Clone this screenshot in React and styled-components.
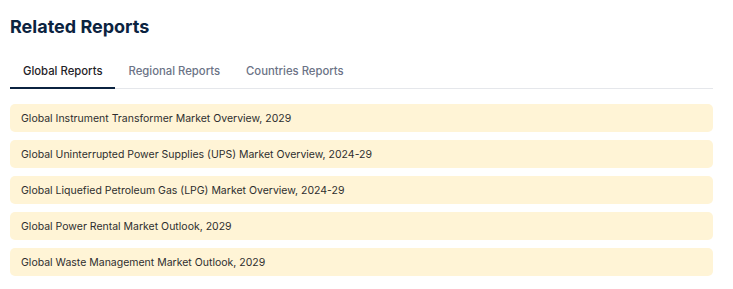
import styled, { createGlobalStyle } from 'styled-components'

const reports = [
    "Global Instrument Transformer Market Overview, 2029",
    "Global Uninterrupted Power Supplies (UPS) Market Overview, 2024-29",
    "Global Liquefied Petroleum Gas (LPG) Market Overview, 2024-29",
    "Global Power Rental Market Outlook, 2029",
    "Global Waste Management Market Outlook, 2029",
];

const tabs = ["Global Reports", "Regional Reports", "Countries Reports"];

export default function App () {
    return(
        <>
            <GlobalStyle/>
            <Section>
                <Title>Related Reports</Title>
                <TabBar>
                    {tabs.map((t, i) => <Tab key={t} $active={i === 0}>{t}</Tab>)}
                </TabBar>
                <List>
                    {reports.map(r => <ReportItem key={r}>{r}</ReportItem>)}
                </List>
            </Section>
        </>
    )
};

//styles______________________________________________
const GlobalStyle = createGlobalStyle`
    body {
        margin: 0;
        background: #ffffff;
        font-family: Inter, "Liberation Sans", sans-serif;
    }
`;
const Section = styled.div`
    width: 703px;
    padding: 15px 0 0 10px;
`;
const Title = styled.h2`
    margin: 0;
    font-size: 18px;
    line-height: 24px;
    font-weight: 700;
    color: #0b2340;
`;
const TabBar = styled.div`
    display: flex;
    margin-top: 19px;
    border-bottom: 1px solid #e5e7eb;
`;
const Tab = styled.div`
    padding: 0 13px;
    height: 31px;
    line-height: 26px;
    font-size: 11.3px;
    font-weight: 500;
    color: ${p => p.$active ? '#1f2328' : '#6b7386'};
    border-bottom: 2px solid ${p => p.$active ? '#0b2340' : 'transparent'};
    margin-bottom: -1px;
    box-sizing: border-box;
`;
const List = styled.div`
    display: flex;
    flex-direction: column;
    gap: 8px;
    margin-top: 15px;
`;
const ReportItem = styled.div`
    height: 28px;
    display: flex;
    align-items: center;
    padding: 0 11px;
    background: #fff4d6;
    border-radius: 5px;
    font-size: 10.5px;
    color: #2e2e2e;
`;
